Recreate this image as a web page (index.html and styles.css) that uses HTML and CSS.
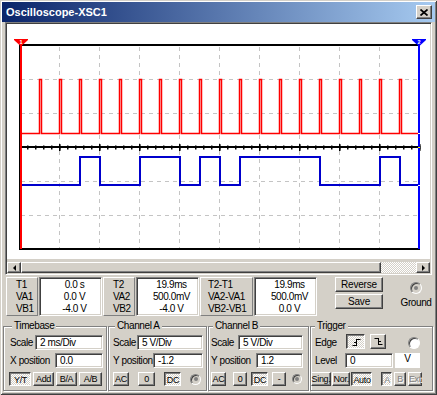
FILE: index.html
```html
<!DOCTYPE html>
<html lang="en">
<head>
  <meta charset="UTF-8">
  <title>Oscilloscope-XSC1</title>
  <link rel="stylesheet" href="styles.css">
</head>
<body>
  <div class="window">
    <div class="titlebar">
      <span class="title">Oscilloscope-XSC1</span>
      <span class="close raised">
        <svg width="8" height="7" viewBox="0 0 8 7"><path d="M0.5 0.5L7.5 6.5M7.5 0.5L0.5 6.5" stroke="#000" stroke-width="1.7"/></svg>
      </span>
    </div>

    <div class="screen">
      <svg class="plot" width="423" height="235" viewBox="7 24 423 235">
        <!-- grid -->
        <g stroke="#c4c4c4" stroke-width="1" stroke-dasharray="4 4" fill="none">
          <path d="M59.5 47V248M99.5 47V248M139.5 47V248M179.5 47V248M219.5 47V248M259.5 47V248M299.5 47V248M339.5 47V248M379.5 47V248"/>
          <path d="M21 79.5H418M21 113.5H418M21 181.5H418M21 215.5H418"/>
        </g>
        <!-- frame and time axis -->
        <g stroke="#000" fill="none">
          <path d="M19 45H420M19 249H420" stroke-width="2"/>
          <path d="M19.5 44V250" stroke-width="1"/>
          <path d="M19 147H420" stroke-width="2"/>
          <path d="M19 147.5H421" stroke-width="4" stroke-dasharray="1.5 6.5"/>
          <path d="M19 147.5H421" stroke-width="7" stroke-dasharray="1.5 38.5"/>
        </g>
        <!-- channel A -->
        <path fill="none" stroke="#ff0000" stroke-width="1.5"
          d="M21 79.5V133.5H39.5v-54h2v54h18v-54h2v54h18v-54h2v54h18v-54h2v54h18v-54h2v54h18v-54h2v54h18v-54h2v54h18v-54h2v54h18v-54h2v54h18v-54h2v54h18v-54h2v54h18v-54h2v54h18v-54h2v54h18v-54h2v54h18v-54h2v54h18v-54h2v54h18v-54h2v54h18v-54h2v54h18v-54h2v54H419"/>
        <!-- channel B -->
        <path fill="none" stroke="#0000cc" stroke-width="2"
          d="M20 185H80V157H100V185H140V157H180V185H200V157H220V185H240V157H320V185H380V157H400V185H419"/>
        <!-- cursors -->
        <rect x="20" y="39" width="2" height="210" fill="#f00"/>
        <rect x="418" y="39" width="2" height="210" fill="#00f"/>
        <rect x="418" y="133" width="2" height="1" fill="#fff"/>
        <rect x="418" y="185" width="2" height="1" fill="#fff"/>
        <rect x="418" y="147" width="2" height="1" fill="#ff0"/>
        <path d="M14 39H28V40L22 45.5H20L14 40Z" fill="#f00"/>
        <path d="M412 39H426V40L420 45.5H418L412 40Z" fill="#00f"/>
        <text x="21" y="43.6" class="mark">1</text>
        <text x="419" y="43.6" class="mark">2</text>
      </svg>

      <div class="hscroll">
        <span class="sb-arrow raised"><span class="tri-left"></span></span>
        <span class="sb-thumb raised"></span>
        <span class="sb-track"></span>
        <span class="sb-arrow raised"><span class="tri-right"></span></span>
      </div>
    </div>

    <div class="readouts">
      <div class="rlabel"><div>T1</div><div>VA1</div><div>VB1</div></div>
      <div class="rvalue sunken"><div>0.0 s</div><div>0.0 V</div><div>-4.0 V</div></div>
      <div class="rlabel"><div>T2</div><div>VA2</div><div>VB2</div></div>
      <div class="rvalue sunken"><div>19.9ms</div><div>500.0mV</div><div>-4.0 V</div></div>
      <div class="rlabel wide"><div>T2-T1</div><div>VA2-VA1</div><div>VB2-VB1</div></div>
      <div class="rvalue sunken"><div>19.9ms</div><div>500.0mV</div><div>0.0 V</div></div>
      <div class="rbuttons">
        <button class="btn big">Reverse</button>
        <button class="btn big">Save</button>
      </div>
      <div class="ground">
        <span class="radio large dot"></span>
        <span>Ground</span>
      </div>
    </div>

    <div class="controls">
      <div class="group tb">
        <span class="gtitle">Timebase</span>
        <div class="row"><span>Scale</span><span class="field scale sunken">2 ms/Div</span></div>
        <div class="row"><span>X position</span><span class="field pos sunken">0.0</span></div>
        <div class="btnrow">
          <button class="btn on">Y/T</button>
          <button class="btn">Add</button>
          <button class="btn">B/A</button>
          <button class="btn">A/B</button>
        </div>
      </div>

      <div class="group cha">
        <span class="gtitle">Channel A</span>
        <div class="row"><span>Scale</span><span class="field scale sunken">5 V/Div</span></div>
        <div class="row"><span>Y position</span><span class="field pos sunken">-1.2</span></div>
        <div class="btnrow">
          <button class="btn ac">AC</button>
          <button class="btn zero">0</button>
          <button class="btn on dc">DC</button>
          <span class="radio dot"></span>
        </div>
      </div>

      <div class="group chb">
        <span class="gtitle">Channel B</span>
        <div class="row"><span>Scale</span><span class="field scale sunken">5 V/Div</span></div>
        <div class="row"><span>Y position</span><span class="field pos sunken">1.2</span></div>
        <div class="btnrow">
          <button class="btn ac">AC</button>
          <button class="btn zero">0</button>
          <button class="btn on dc">DC</button>
          <button class="btn minus">-</button>
          <span class="radio small dot"></span>
        </div>
      </div>

      <div class="group trig">
        <span class="gtitle">Trigger</span>
        <div class="row start">
          <span class="lbl">Edge</span>
          <button class="btn on edge rise">
            <svg width="9" height="9" viewBox="0 0 9 9"><path d="M4.5 1.5H8.5M4.5 1V8M0.5 7.5H4.5M2 4.5H4.5" stroke="#000" fill="none"/></svg>
          </button>
          <button class="btn edge fall">
            <svg width="9" height="9" viewBox="0 0 9 9"><path d="M0.5 1.5H4.5M4.5 1V8M4.5 7.5H8.5M4.5 4.5H7" stroke="#000" fill="none"/></svg>
          </button>
          <span class="radio large open"></span>
        </div>
        <div class="row start">
          <span class="lbl">Level</span>
          <span class="field level sunken">0</span>
          <span class="unit">V</span>
        </div>
        <div class="btnrow">
          <button class="btn sing">Sing.</button>
          <button class="btn nor">Nor.</button>
          <button class="btn on auto">Auto</button>
          <button class="btn on off src">A</button>
          <button class="btn off src">B</button>
          <button class="btn off ext">Ext</button>
        </div>
      </div>
    </div>
  </div>
</body>
</html>
```

FILE: styles.css
```css
* {
  box-sizing: border-box;
}

body {
  margin: 0;
  background: #d4d0c8;
  font-family: "Liberation Sans", Arial, sans-serif;
  font-size: 10px;
  letter-spacing: -0.4px;
  color: #000;
}

.window {
  width: 437px;
  height: 395px;
  padding: 2px;
  background: #d4d0c8;
  box-shadow: inset 1px 1px #d4d0c8, inset -1px -1px #404040, inset 2px 2px #fff, inset -2px -2px #808080;
  overflow: hidden;
}

/* 3d borders */
.raised {
  background: #d4d0c8;
  border: 1px solid;
  border-color: #fff #404040 #404040 #fff;
  box-shadow: inset -1px -1px #808080;
}

.sunken {
  border: 1px solid;
  border-color: #808080 #fff #fff #808080;
  box-shadow: inset 1px 1px #404040, inset -1px -1px #d4d0c8;
}

/* title bar */
.titlebar {
  height: 20px;
  display: flex;
  align-items: center;
  justify-content: space-between;
  padding: 0 3px 0 4px;
  background: linear-gradient(to right, #0a246a, #a6caf0);
}

.title {
  color: #fff;
  font-weight: bold;
  font-size: 11px;
  letter-spacing: 0;
}

.close {
  width: 16px;
  height: 14px;
  display: flex;
  align-items: center;
  justify-content: center;
}

/* scope screen */
.screen {
  margin: 0 3px;
  height: 253px;
  border: 1px solid;
  border-color: #808080 #fff #fff #808080;
  box-shadow: inset 1px 1px #404040, inset -1px -1px #d4d0c8;
  padding: 1px;
}

.plot {
  display: block;
  background: #fff;
}

.mark {
  font-size: 5.5px;
  font-weight: bold;
  fill: #fff;
  text-anchor: middle;
  letter-spacing: 0;
}

.hscroll {
  display: flex;
  height: 11px;
  margin-top: 3px;
}

.sb-arrow {
  width: 14px;
  display: flex;
  align-items: center;
  justify-content: center;
}

.tri-left {
  border-top: 3px solid transparent;
  border-bottom: 3px solid transparent;
  border-right: 3px solid #000;
}

.tri-right {
  border-top: 3px solid transparent;
  border-bottom: 3px solid transparent;
  border-left: 3px solid #000;
}

.sb-thumb {
  width: 360px;
}

.sb-track {
  flex: 1;
  background: repeating-conic-gradient(#fff 0 25%, #d4d0c8 0 50%) 0 0 / 2px 2px;
}

/* cursor readouts */
.readouts {
  display: flex;
  gap: 1px;
  margin-top: 2px;
  padding-left: 4px;
  height: 39px;
  line-height: 12px;
}

.rlabel {
  width: 32px;
  height: 39px;
  border: 1px solid;
  border-color: #fff #808080 #808080 #fff;
  padding: 1px 0 0 9px;
}

.rlabel.wide {
  width: 53px;
  padding-left: 7px;
}

.rvalue {
  width: 63px;
  height: 39px;
  background: #fff;
  text-align: center;
  padding: 1px 0 0 8px;
}

.rbuttons {
  margin-left: 17px;
  width: 48px;
  display: flex;
  flex-direction: column;
  gap: 2px;
}

.ground {
  margin-left: 14px;
  width: 36px;
  display: flex;
  flex-direction: column;
  align-items: center;
  padding-top: 5px;
  gap: 3px;
}

/* buttons */
.btn {
  height: 14px;
  padding: 0;
  margin: 0;
  font-family: inherit;
  font-size: 9px;
  letter-spacing: -0.3px;
  color: #000;
  background: #d4d0c8;
  border: 1px solid;
  border-color: #fff #404040 #404040 #fff;
  box-shadow: inset -1px -1px #808080;
  display: flex;
  align-items: center;
  justify-content: center;
  white-space: nowrap;
  overflow: visible;
}

.btn.big {
  height: 15px;
  font-size: 10px;
  letter-spacing: -0.2px;
}

.btn.on {
  border-color: #404040 #fff #fff #404040;
  box-shadow: inset 1px 1px #808080;
  background: repeating-conic-gradient(#fff 0 25%, #d4d0c8 0 50%) 0 0 / 2px 2px;
  padding: 1px 0 0 1px;
}

.btn.off {
  color: #808080;
  text-shadow: 1px 1px #fff;
}

/* radio buttons */
.radio {
  width: 11px;
  height: 11px;
  border-radius: 50%;
  border: 1px solid;
  border-color: #808080 #fff #fff #808080;
  box-shadow: inset 1px 1px #404040;
  background: #d4d0c8;
  display: flex;
  align-items: center;
  justify-content: center;
  flex: none;
}

.radio.large {
  width: 12px;
  height: 12px;
}

.radio.small {
  width: 10px;
  height: 10px;
}

.radio.dot::after {
  content: '';
  width: 4px;
  height: 4px;
  border-radius: 50%;
  background: #808080;
}

.radio.open {
  background: #fff;
}

/* control groups */
.controls {
  display: flex;
  gap: 1px;
  margin-top: 10px;
  padding-left: 1px;
}

.group {
  position: relative;
  height: 65px;
  border: 1px solid #808080;
  box-shadow: inset 1px 1px #fff, 1px 1px #fff;
  padding: 8px 3px 0 4px;
  display: flex;
  flex-direction: column;
  gap: 3px;
}

.gtitle {
  position: absolute;
  top: -7px;
  left: 6px;
  padding: 0 2px;
  line-height: 12px;
  background: #d4d0c8;
}

.row {
  height: 15px;
  display: flex;
  align-items: center;
  justify-content: space-between;
}

.row.start {
  justify-content: flex-start;
}

.field {
  height: 15px;
  background: #fff;
  padding-left: 4px;
  display: flex;
  align-items: center;
}

.btnrow {
  height: 14px;
  margin-top: 1px;
  display: flex;
  align-items: center;
}

.tb {
  width: 104px;
  padding-left: 6px;
}

.tb .gtitle {
  left: 8px;
}

.tb .scale { width: 68px; }
.tb .pos { width: 48px; }

.tb .btnrow {
  gap: 2px;
  margin-left: -1px;
}

.tb .btn:nth-child(1) { width: 22px; }
.tb .btn:nth-child(2) { width: 21px; }
.tb .btn:nth-child(3) { width: 21px; }
.tb .btn:nth-child(4) { width: 23px; }

.cha {
  width: 99px;
}

.cha .scale { width: 66px; }
.cha .pos { width: 50px; }

.cha .btnrow {
  gap: 9px;
}

.cha .ac { width: 16px; }
.cha .zero { width: 17px; }
.cha .dc { width: 17px; }

.chb {
  width: 101px;
  padding-left: 2px;
  padding-right: 5px;
}

.chb .gtitle {
  left: 4px;
}

.chb .scale { width: 65px; }
.chb .pos { width: 47px; }

.chb .btnrow {
  gap: 4px;
}

.chb .ac { width: 15px; }
.chb .zero { width: 14px; margin-left: 3px; }
.chb .dc { width: 17px; }
.chb .minus { width: 14px; }
.chb .radio { margin-left: 2px; }

.trig {
  width: 123px;
  padding-right: 10px;
}

.trig .gtitle {
  left: 4px;
}

.trig .lbl {
  width: 30px;
}

.edge {
  height: 15px;
}

.rise {
  width: 19px;
  margin-left: 1px;
  margin-top: -2px;
}

.fall {
  width: 16px;
  margin-left: 5px;
  margin-top: -2px;
}

.trig .radio {
  margin-left: auto;
  margin-right: 2px;
}

.level { width: 48px; }

.unit {
  width: 25px;
  height: 15px;
  margin-left: 2px;
  background: #fff;
  text-align: center;
  line-height: 12px;
}

.trig .btnrow {
  margin-left: -4px;
  gap: 1px;
}

.sing { width: 20px; }
.nor { width: 21px; }
.auto { width: 21px; }

.src {
  width: 13px;
  margin-left: 1px;
}

.auto + .src {
  margin-left: 8px;
}

.ext {
  width: 15px;
  margin-left: 1px;
}
```
